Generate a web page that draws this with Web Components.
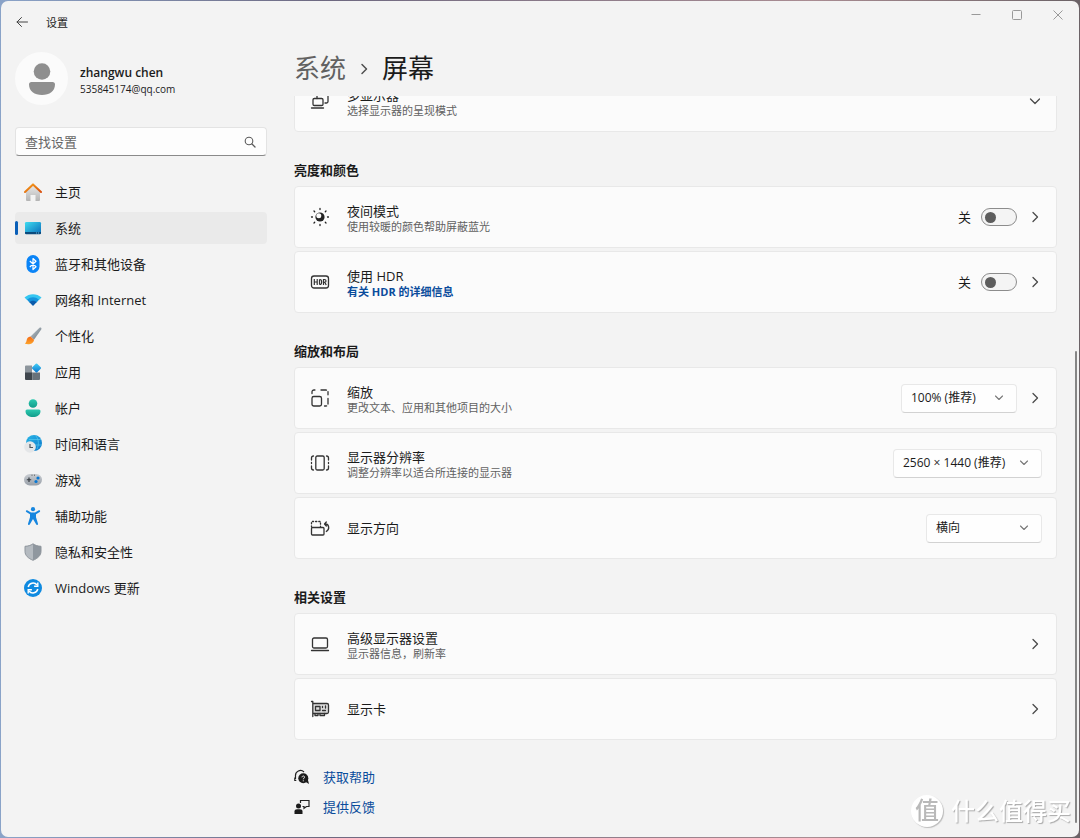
<!DOCTYPE html>
<html lang="zh-CN">
<head>
<meta charset="utf-8">
<title>设置</title>
<style>
html{height:100%}
body{margin:0;height:100%;background:linear-gradient(90deg,#8aa3c8 0,#6d6880 30%,#a98c92 75%,#6b6266 100%);font-family:"Open Sans","Noto Sans CJK SC",sans-serif;font-size:13px;line-height:16px;color:#1b1b1b}
</style>
</head>
<body>
<settings-window>
  <settings-sidebar slot="sidebar">
    <nav-item icon="home">主页</nav-item>
    <nav-item icon="system" current>系统</nav-item>
    <nav-item icon="bluetooth">蓝牙和其他设备</nav-item>
    <nav-item icon="wifi">网络和 Internet</nav-item>
    <nav-item icon="brush">个性化</nav-item>
    <nav-item icon="apps">应用</nav-item>
    <nav-item icon="account">帐户</nav-item>
    <nav-item icon="time">时间和语言</nav-item>
    <nav-item icon="game">游戏</nav-item>
    <nav-item icon="access">辅助功能</nav-item>
    <nav-item icon="shield">隐私和安全性</nav-item>
    <nav-item icon="update">Windows 更新</nav-item>
  </settings-sidebar>
  <settings-group>
    <setting-card icon="multi" title-text="多显示器" desc="选择显示器的呈现模式" more="down"></setting-card>
  </settings-group>
  <settings-group heading="亮度和颜色">
    <setting-card icon="night" title-text="夜间模式" desc="使用较暖的颜色帮助屏蔽蓝光" more="right"><toggle-switch label="夜间模式"></toggle-switch></setting-card>
    <setting-card icon="hdr" title-text="使用 HDR" link="有关 HDR 的详细信息" more="right"><toggle-switch label="使用 HDR"></toggle-switch></setting-card>
  </settings-group>
  <settings-group heading="缩放和布局">
    <setting-card icon="scale" title-text="缩放" desc="更改文本、应用和其他项目的大小" more="right"><drop-down label="缩放" value="100% (推荐)"></drop-down></setting-card>
    <setting-card icon="resolution" title-text="显示器分辨率" desc="调整分辨率以适合所连接的显示器"><drop-down label="显示器分辨率" value="2560 × 1440 (推荐)" wide></drop-down></setting-card>
    <setting-card icon="rotate" title-text="显示方向"><drop-down label="显示方向" value="横向"></drop-down></setting-card>
  </settings-group>
  <settings-group heading="相关设置">
    <setting-card icon="laptop" title-text="高级显示器设置" desc="显示器信息，刷新率" more="right"></setting-card>
    <setting-card icon="gpu" title-text="显示卡" more="right"></setting-card>
  </settings-group>
  <help-links></help-links>
</settings-window>
<site-mark></site-mark>

<script>
const S = (w, h, body, box) => `<svg width="${w}" height="${h}" viewBox="${box || `0 0 ${w} ${h}`}" fill="none" aria-hidden="true">${body}</svg>`;
const line = 'stroke="#333" stroke-width="1.3" stroke-linecap="round" stroke-linejoin="round"';
const ICONS = {
  home: S(18,18,`<defs><linearGradient id="a" x2="0" y2="1"><stop stop-color="#e9e9e9"/><stop offset="1" stop-color="#b4b4b4"/></linearGradient><linearGradient id="b" x2="1" y2="1"><stop stop-color="#f7a21b"/><stop offset="1" stop-color="#d8500f"/></linearGradient></defs><path d="M2 8l7-6 7 6v9a1 1 0 0 1-1 1h-3.500v-6h-5v6H3a1 1 0 0 1-1-1z" fill="url(#a)"/><path d="M1 9l8-7.600L17 9" stroke="url(#b)" stroke-width="2" stroke-linecap="round" stroke-linejoin="round"/>`),
  system: S(18,18,`<defs><linearGradient id="a" x2="1" y2="1"><stop stop-color="#3fdcf0"/><stop offset="1" stop-color="#0a6cba"/></linearGradient></defs><rect x="1" y="3" width="16" height="12" rx="1.200" fill="url(#a)"/><path d="M1 13h16v1a1.200 1.200 0 0 1-1.200 1.200H2.200A1.200 1.200 0 0 1 1 14z" fill="#0b4a7c"/><path d="M12 14h1M14 14h1" stroke="#7fd6f5" stroke-width=".8"/>`),
  bluetooth: S(18,18,`<rect x="2.500" y="0" width="13" height="18" rx="6.500" fill="#0a84f7"/><path d="M5.800 6l6.200 5.800L9 14.500v-11L12 6.200 5.800 12" stroke="#fff" stroke-width="1.200" stroke-linejoin="round"/>`),
  wifi: S(18,18,`<path d="M.5 6.500C5 2 13 2 17.500 6.500L15 9H3z" fill="#35c6f1"/><path d="M3 8.800c3.500-3.300 8.500-3.300 12 0L12.500 11.500h-7z" fill="#1593dc"/><path d="M5.400 11.200c2-2 5.200-2 7.200 0L9 15z" fill="#0b5bab"/>`),
  brush: S(18,18,`<defs><linearGradient id="a" x2="1" y2="1"><stop stop-color="#c3ccd3"/><stop offset="1" stop-color="#65717b"/></linearGradient><linearGradient id="b" x2="0" y2="1"><stop stop-color="#f46a16"/><stop offset="1" stop-color="#fda52b"/></linearGradient></defs><path d="M6.500 9.500L15.500.8c1.200-.9 2.500.2 1.700 1.600L10 12.800z" fill="url(#a)"/><path d="M6.500 9.500c-2.500.3-3.600 1.700-3.900 4C2.400 15.200 1.600 16 .8 16.600 3.500 18 9.700 17.600 10 12.800z" fill="url(#b)"/>`),
  apps: S(18,18,`<defs><linearGradient id="a" x2="1" y2="1"><stop stop-color="#45d1f6"/><stop offset="1" stop-color="#0873cf"/></linearGradient></defs><path d="M1 3.500A1 1 0 0 1 2 2.500h6V10H1z" fill="#8d959c"/><path d="M1 9.500h7.500v7.500H2a1 1 0 0 1-1-1z" fill="#3f464d"/><path d="M8.500 9.500H16V16a1 1 0 0 1-1 1H8.500z" fill="#69727a"/><rect x="9" y="1.500" width="7" height="7" rx="1" transform="rotate(45 12.500 5)" fill="url(#a)"/>`),
  account: S(18,18,`<defs><linearGradient id="a" x2="0" y2="1"><stop stop-color="#2ccab0"/><stop offset="1" stop-color="#129c8a"/></linearGradient></defs><circle cx="9" cy="4.500" r="4.300" fill="url(#a)"/><path d="M3 10.500h12a1.500 1.500 0 0 1 1.500 1.500c0 4-3.500 6-7.500 6s-7.500-2-7.500-6A1.500 1.500 0 0 1 3 10.500z" fill="url(#a)"/>`),
  time: S(18,18,`<defs><linearGradient id="a" x2="1" y2="1"><stop stop-color="#2bb8e8"/><stop offset="1" stop-color="#0b76ca"/></linearGradient></defs><circle cx="10" cy="8" r="8" fill="url(#a)"/><path d="M12 1c3 4 3 9 1 13M5 4.500h12M8 10h9.500" stroke="#55c8ee" stroke-width=".7"/><circle cx="6" cy="12" r="5.800" fill="#e4e6e8"/><path d="M6 9v3.500h3" stroke="#50575e" stroke-width="1.200"/>`),
  game: S(18,18,`<defs><linearGradient id="a" x2="0" y2="1"><stop stop-color="#c9cdd2"/><stop offset="1" stop-color="#989fa8"/></linearGradient></defs><rect y="3" width="18" height="11.500" rx="5.750" fill="url(#a)"/><path d="M5 6.500v4.500M2.800 8.750h4.400" stroke="#343a40" stroke-width="1.200"/><path d="M7.500 4.200h1M10 4.200h1" stroke="#555"/><circle cx="14" cy="7" r="1.600" fill="#0878d4"/><circle cx="12" cy="10.500" r="1.600" fill="#0878d4"/>`),
  access: S(18,18,`<circle cx="9" cy="2.200" r="2.100" fill="#1686df"/><path d="M3.200 3.300L7 5.500h4l3.800-2.200c1.100-.5 1.900.9.900 1.600L12 7.300v3l2 6.400c.2 1.200-1.400 1.700-1.900.6L9 12l-3.100 5.300c-.5 1.100-2.100.6-1.900-.6l2-6.400v-3L2.300 4.900c-1-.7-.2-2.100.9-1.600z" fill="#1686df"/>`),
  shield: S(18,18,`<path d="M9 .8c2.500 1.700 4.800 2.400 8 2.500v5c0 4.200-3.200 7-8 9z" fill="#8f979f"/><path d="M9 .8C6.500 2.500 4.200 3.200 1 3.300v5c0 4.200 3.200 7 8 9z" fill="#b4bac0"/><path d="M9 .8c2.500 1.700 4.800 2.400 8 2.500v5c0 4.200-3.200 7-8 9-4.800-2-8-4.800-8-9v-5c3.200-.1 5.500-.8 8-2.500z" stroke="#8d949b"/>`),
  update: S(18,18,`<circle cx="9" cy="9" r="9" fill="#0f8ae0"/><path d="M4.200 8A5 5 0 0 1 13 6M13.800 10A5 5 0 0 1 5 12" stroke="#fff" stroke-width="1.500"/><path d="M13.800 3.500v3.700h-3.700M4.200 14.500v-3.700h3.700" stroke="#fff" stroke-width="1.400"/>`),
  multi: S(20,20,`<g ${line}><path d="M7 7.500V4.500A1.500 1.500 0 0 1 8.500 3h8A1.500 1.500 0 0 1 18 4.500v6a1.500 1.500 0 0 1-1.500 1.500H15"/><rect x="3" y="7.500" width="10" height="7" rx="1.300"/><path d="M1.500 17h12"/></g>`),
  night: S(20,20,`<circle cx="10" cy="10" r="4.600" fill="#222"/><circle cx="8.800" cy="8.800" r="2.500" fill="#fbfbfb"/><path d="M10 1.500v1M10 17.500v1M1.500 10h1M17.500 10h1M4 4l.7.7M15.300 15.300l.7.7M16 4l-.7.7M4.700 15.300l-.7.7" stroke="#222" stroke-width="1.300" stroke-linecap="round"/>`),
  hdr: S(20,20,`<rect x="1.500" y="4" width="17" height="12" rx="2.500" ${line}/><path d="M4.300 7v6M7.200 7v6M4.300 10h2.900M9.500 7.500v5M9.500 7.500h.5c2.200 0 2.200 5 0 5h-.5M13.500 13V7.500h1c2 0 2 2.800 0 2.800h-1M14.800 10.300L16.200 13" stroke="#333" stroke-width="1.200"/>`),
  scale: S(20,20,`<g ${line}><rect x="2" y="8.500" width="9.500" height="9.500" rx="1.800"/><path d="M2 5.500V4.300A2 2 0 0 1 4 2h3M11 2h5A2 2 0 0 1 18 4.300v2.500M18 10.500V16a2 2 0 0 1-2 2h-1.500" stroke-dasharray="5.500 2.200"/></g>`),
  resolution: S(20,20,`<g ${line}><rect x="5.800" y="3" width="8.400" height="14" rx="1.500"/><path d="M3.500 3c-1.200 0-2 .8-2 2v2M1.500 9.500v1M1.500 13v2c0 1.200.8 2 2 2M16.500 3c1.200 0 2 .8 2 2v2M18.500 9.500v1M18.500 13v2c0 1.200-.8 2-2 2"/></g>`),
  rotate: S(20,20,`<g ${line}><rect x="1.500" y="9.500" width="12.500" height="7.500" rx="1"/><path d="M1.500 9V3.500H10.500V9" stroke-dasharray="1.200 2"/><path d="M14.800 6c4.500-.4 5.200 5.500 1.500 7.500M16.300 4l-1.800 2 1.800 2"/></g>`),
  laptop: S(20,20,`<rect x="2.500" y="4" width="15" height="10" rx="1.500" ${line}/><path d="M1.500 16.500h17" ${line}/>`),
  gpu: S(20,20,`<path d="M2.800 4.500H17a1.500 1.500 0 0 1 1.500 1.500v7a1.500 1.500 0 0 1-1.500 1.500H2.800z" fill="#ddd"/><g ${line}><path d="M1.500 2.500h1.300v15M2.800 4.500H17a1.500 1.500 0 0 1 1.500 1.500v7a1.500 1.500 0 0 1-1.500 1.500H2.800"/><rect x="5.500" y="7.500" width="4.500" height="4"/><path d="M12.500 7.500v1M15.500 7v2M12.500 11.500h3M5 14.500v2h3v-2M10 14.500v2h4.500v-2"/></g>`),
  help: S(16,16,`<path d="M1.500 10V7a5 5 0 0 1 8.500-4M.8 8.500v3h1.500" stroke="#222" stroke-width="1.200"/><circle cx="9.300" cy="9.300" r="5" fill="#1b1b1b"/><path d="M11 12.500l4 2.500-1.300-5z" fill="#1b1b1b"/><path d="M8 8.300c0-1.800 2.800-1.600 2.500 0-.2.900-1.200.9-1.200 2M9.300 11.300v1" stroke="#f3f3f3"/>`),
  feedback: S(16,16,`<circle cx="4.500" cy="7" r="2.500" fill="#1b1b1b"/><path d="M.5 15v-2.500C.5 11 1.500 10.300 3 10.300h3c1.500 0 2.500.7 2.500 2.200V15z" fill="#1b1b1b"/><path d="M6.500 4V1.500h8.500v6h-2.500L10 9.300V7.500H8.500" stroke="#222" stroke-width="1.200"/>`),
  right: S(14,14,`<path d="M5 2.500L9.500 7 5 11.500" stroke="#4a4a4a" stroke-width="1.300" stroke-linecap="round" stroke-linejoin="round"/>`),
  down: S(14,14,`<path d="M2.500 5L7 9.500 11.500 5" stroke="#4a4a4a" stroke-width="1.300" stroke-linecap="round" stroke-linejoin="round"/>`),
  smalldown: S(10,10,`<path d="M1.500 3L5 6.500 8.500 3" stroke="#777" stroke-width="1.100" stroke-linecap="round" stroke-linejoin="round"/>`),
  crumb: S(10,14,`<path d="M3 2.500L7.500 7 3 11.500" stroke="#4f4f4f" stroke-width="1.500" stroke-linecap="round" stroke-linejoin="round"/>`),
  back: S(12,12,`<path d="M5.500 1.500L1 6l4.500 4.500M1 6h10.500" stroke="#444" stroke-linecap="round" stroke-linejoin="round"/>`),
  search: S(12,12,`<circle cx="5" cy="5" r="3.800" stroke="#5a5a5a" stroke-width="1.100"/><path d="M8 8l3 3" stroke="#5a5a5a" stroke-width="1.300" stroke-linecap="round"/>`),
  min: S(10,10,`<path d="M.5 4.500h9" stroke="#999"/>`),
  max: S(10,10,`<rect x=".5" y=".5" width="9" height="9" rx="1" stroke="#999"/>`),
  close: S(10,10,`<path d="M.5.5l9 9M9.500.5l-9 9" stroke="#999"/>`),
  person: S(26,32,`<circle cx="13" cy="8.500" r="8.300" fill="#8f8f8f"/><path d="M2.500 19h21a2.500 2.500 0 0 1 2.500 2.500C26 28 20.500 32 13 32S0 28 0 21.500A2.500 2.500 0 0 1 2.500 19z" fill="#8f8f8f"/>`)
};
const RESET = `*{box-sizing:border-box}svg{display:block;flex:none}button{font:inherit;color:inherit;border:0;background:none;padding:0;display:grid;place-items:center}a{color:#0a4c9c;text-decoration:none}h1,h2,h3,p{margin:0;font:inherit}`;
class Base extends HTMLElement {
  connectedCallback() {
    if (this.shadowRoot) return;
    this.attachShadow({ mode: 'open' }).innerHTML = `<style>${RESET}${this.css()}</style>${this.html()}`;
    this.ready?.();
  }
  at(n) { return this.getAttribute(n) || ''; }
}

customElements.define('settings-window', class extends Base {
  css() { return `
    :host{display:block;height:100vh;padding:1px;box-sizing:border-box}
    .win{height:100%;display:flex;flex-direction:column;background:#f3f3f3;border-radius:7px;overflow:hidden;position:relative}
    .bar{flex:none;height:43px;display:flex;align-items:flex-start;padding-right:1px}
    .back{margin:15px 0 0 15px;width:12px;height:12px}
    .name{flex:1;margin:14px 0 0 18px;font-size:11px}
    .ctl{width:41px;height:28px}
    .body{flex:1;min-height:0;display:flex;gap:27px;padding-left:14px}
    main{flex:1;min-width:0;display:flex;flex-direction:column}
    .crumbs{flex:none;height:52px;padding-top:8px;display:flex;align-items:flex-start;gap:13px;font-size:26px;line-height:32px}
    .crumbs a{color:#616161}
    .crumbs svg{margin-top:10px}
    .scroll{flex:1;min-height:0;overflow-y:auto;scrollbar-width:none;padding:0 22px 48px 0}
    .thumb{position:absolute;right:2px;top:350px;bottom:14px;width:2px;border-radius:1px;background:#858585}`; }
  html() { return `<div class="win">
    <header class="bar"><button class="back" aria-label="返回">${ICONS.back}</button><span class="name">设置</span>
      <button class="ctl" aria-label="最小化">${ICONS.min}</button><button class="ctl" aria-label="最大化">${ICONS.max}</button><button class="ctl" aria-label="关闭">${ICONS.close}</button></header>
    <div class="body"><slot name="sidebar"></slot>
      <main><h1 class="crumbs"><a href="#system">系统</a>${ICONS.crumb}<span>屏幕</span></h1>
      <div class="scroll"><slot></slot></div></main></div>
    <div class="thumb"></div></div>`; }
  ready() {
    const s = this.shadowRoot.querySelector('.scroll');
    customElements.whenDefined('help-links').then(() => { s.scrollTop = 26; });
  }
});

customElements.define('settings-sidebar', class extends Base {
  css() { return `
    :host{display:block;flex:none;width:252px}
    .user{display:flex;align-items:center;gap:12px;height:69px}
    .pic{width:53px;height:53px;border-radius:50%;background:#fbfbfb;display:grid;place-items:center;flex:none}
    .who{padding-top:4px}
    .who b{display:block;font-weight:600;font-size:12px}
    .who span{display:block;font-size:10px}
    .search{display:flex;align-items:center;margin-top:14px;height:29px;background:#fdfdfd;border:1px solid #e3e3e3;border-bottom-color:#8a8a8a;border-radius:4px;padding:0 10px 0 9px}
    input{flex:1;min-width:0;height:20px;border:0;outline:0;background:none;font:inherit;padding:0;color:inherit}
    input::placeholder{color:#666;opacity:1}
    nav{display:grid;gap:4px;margin-top:20px}`; }
  html() { return `<div class="user"><div class="pic">${ICONS.person}</div><div class="who"><b>zhangwu chen</b><span>535845174@qq.com</span></div></div>
    <label class="search"><input type="text" placeholder="查找设置" aria-label="查找设置">${ICONS.search}</label>
    <nav><slot></slot></nav>`; }
});

customElements.define('nav-item', class extends Base {
  css() { return `
    :host{display:block}
    a{position:relative;display:flex;align-items:center;gap:13px;height:32px;padding-left:9px;border-radius:4px;color:#1b1b1b}
    a[aria-current]{background:#eaeaea}
    a[aria-current]::before{content:"";position:absolute;left:0;top:9px;width:3px;height:14px;border-radius:2px;background:#0a5fb8}`; }
  html() { return `<a href="#${this.at('icon')}"${this.hasAttribute('current') ? ' aria-current="page"' : ''}>${ICONS[this.at('icon')]}<span><slot></slot></span></a>`; }
});

customElements.define('settings-group', class extends Base {
  css() { return `
    :host{display:block;margin-bottom:28px}
    h2{font-weight:600;line-height:20px;padding-bottom:6px}
    .list{display:grid;gap:3px}`; }
  html() { return `${this.at('heading') ? `<h2>${this.at('heading')}</h2>` : ''}<div class="list"><slot></slot></div>`; }
});

customElements.define('setting-card', class extends Base {
  css() { return `
    :host{display:flex;align-items:center;height:62px;box-sizing:border-box;background:#fbfbfb;border:1px solid #e8e8e8;border-radius:4px;padding:0 14px 0 15px;gap:11px}
    .text{flex:1;min-width:0;padding-left:6px}
    .text p,.text a{display:block;font-size:11px;color:#616161}
    h3:not(:last-child){padding-top:3px}
    .text a{color:#0a4c9c;font-weight:700}`; }
  html() {
    const more = this.at('more');
    return `${ICONS[this.at('icon')]}<div class="text"><h3>${this.at('title-text')}</h3>${this.at('desc') ? `<p>${this.at('desc')}</p>` : ''}${this.at('link') ? `<a href="#hdr">${this.at('link')}</a>` : ''}</div>
      <slot></slot>${more ? `<button aria-label="${this.at('title-text')}">${ICONS[more]}</button>` : ''}`;
  }
});

customElements.define('toggle-switch', class extends Base {
  css() { return `
    :host{display:block}
    label{display:flex;align-items:center;gap:10px}
    input{appearance:none;margin:0;width:36px;height:18px;border:1px solid #8c8c8c;border-radius:9px;background:#f4f4f4;display:flex;align-items:center;padding-left:3px}
    input::before{content:"";width:11px;height:11px;border-radius:50%;background:#5d5d5d}
    input:checked{justify-content:flex-end;padding:0 3px;background:#0a5fb8}`; }
  html() { return `<label><span>关</span><input type="checkbox" role="switch" aria-label="${this.at('label')}"></label>`; }
});

customElements.define('drop-down', class extends Base {
  css() { return `
    :host{display:grid;align-items:center;width:116px}
    :host([wide]){width:149px}
    select{grid-area:1/1;appearance:none;width:100%;height:29px;font:inherit;font-size:12px;color:inherit;background:#fefefe;border:1px solid #e8e8e8;border-bottom-color:#d2d2d2;border-radius:4px;padding:0 24px 0 9px}
    svg{grid-area:1/1;justify-self:end;margin-right:13px;pointer-events:none}`; }
  html() { return `<select aria-label="${this.at('label')}"><option>${this.at('value')}</option></select>${ICONS.smalldown}`; }
});

customElements.define('help-links', class extends Base {
  css() { return `
    :host{display:grid;gap:12px;justify-items:start}
    a{display:flex;align-items:center;gap:13px;height:18px}`; }
  html() { return `<a href="#help">${ICONS.help}<span>获取帮助</span></a><a href="#feedback">${ICONS.feedback}<span>提供反馈</span></a>`; }
});

customElements.define('site-mark', class extends Base {
  css() { return `
    :host{position:fixed;right:9px;bottom:11px;display:flex;align-items:center;gap:8px;pointer-events:none;color:#fff;font-size:24px;line-height:32px;font-weight:500;text-shadow:1px 1px 1px #aaa}
    .dot{width:32px;height:32px;border-radius:50%;background:#fff;color:#b9b9b9;text-align:center;text-shadow:none;box-shadow:1px 1px 1px #bbb;line-height:30px}`; }
  html() { return `<span class="dot">值</span><span>什么值得买</span>`; }
});
</script>
</body>
</html>
